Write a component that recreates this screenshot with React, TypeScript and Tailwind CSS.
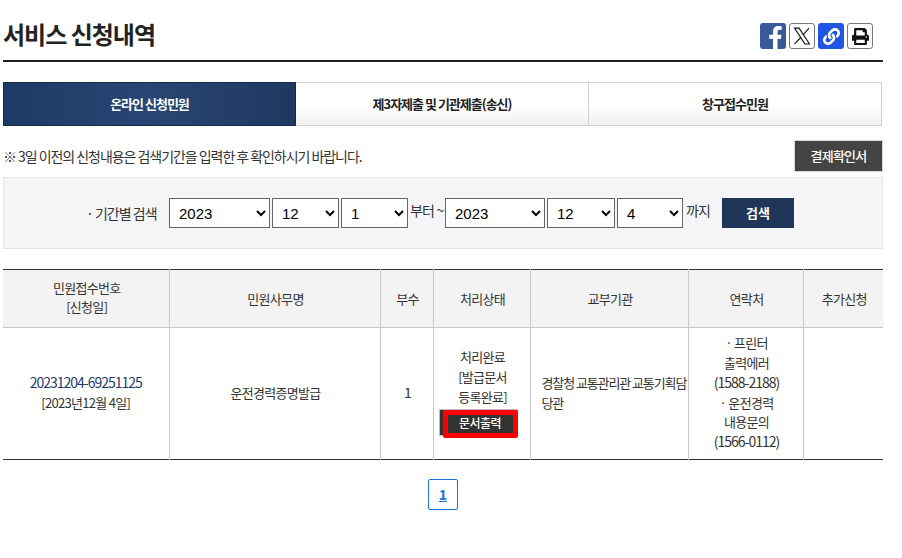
import { FaFacebookF, FaLink, FaPrint } from 'react-icons/fa';

const font = '[font-family:"Noto_Sans_CJK_KR","Liberation_Sans",sans-serif]';

function DateSelect({ value, width }: { value: string; width: string }) {
  return (
    <select
      defaultValue={value}
      className={`${width} h-[30px] border border-[#666] bg-white pl-[5px] text-[15px] text-black [font-family:"Liberation_Sans",sans-serif] rounded-none`}
    >
      <option>{value}</option>
    </select>
  );
}

function Tab({ label, active }: { label: string; active?: boolean }) {
  if (active) {
    return (
      <div className="flex h-[44px] w-[293px] items-center justify-center border border-[#14284a] bg-[linear-gradient(90deg,#1e3a66,#284674_50%,#1f3860)] text-[13px] font-bold tracking-[-1px] text-white">
        {label}
      </div>
    );
  }
  return (
    <div className="flex h-[44px] w-[293px] items-center justify-center border-y border-r border-[#d2d2d2] bg-[linear-gradient(#ffffff_50%,#f0f0f0)] text-[13px] font-bold tracking-[-1px] text-[#222]">
      {label}
    </div>
  );
}

const th = 'border-r border-[#c8c8c8] pl-[2px] font-normal text-[13px] leading-[19px] text-[#333] text-center align-middle';
const td = 'border-r border-[#c8c8c8] pb-[2px] text-[13px] leading-[19.8px] text-[#333] text-center align-middle';
const num = 'text-[14px] leading-none tracking-[-1px]';

export default function App() {
  return (
    <div className={`h-[558px] w-[902px] overflow-hidden bg-white ${font}`}>
      <div className="ml-[3px] w-[880px]">
        {/* 제목 */}
        <div className="flex h-[62px] items-center justify-between border-b-2 border-[#222] pt-[8px]">
          <h1 className="text-[24px] font-bold leading-[36px] tracking-[-1px] text-[#222]">서비스 신청내역</h1>
          <div className="mr-[10px] mt-[4px] flex gap-[3px]">
            <span className="flex h-[26px] w-[26px] items-end justify-center overflow-hidden rounded-[3px] bg-[#3b5998]">
              <FaFacebookF className="h-[23px] w-[23px] translate-x-[2px] text-white" />
            </span>
            <span className="flex h-[26px] w-[26px] items-center justify-center rounded-[3px] border border-[#777] bg-white">
              <svg viewBox="0 0 24 24" className="h-[20px] w-[20px]" fill="none" stroke="#111" strokeWidth="1.3">
                <path d="M3 2.5h5.5l12.5 19h-5.5z" />
                <path d="M20.5 2.5 13 11M10.5 13.8 3 21.5" />
              </svg>
            </span>
            <span className="flex h-[26px] w-[26px] items-center justify-center rounded-[3px] bg-[#1f55e0]">
              <FaLink className="h-[17px] w-[17px] text-white" />
            </span>
            <span className="flex h-[26px] w-[26px] items-center justify-center rounded-[3px] border border-[#777] bg-white">
              <FaPrint className="h-[17px] w-[17px] text-[#111]" />
            </span>
          </div>
        </div>

        {/* 탭 */}
        <div className="mt-[20px] flex">
          <Tab label="온라인 신청민원" active />
          <Tab label="제3자제출 및 기관제출(송신)" />
          <Tab label="창구접수민원" />
        </div>

        {/* 안내 */}
        <div className="mt-[14px] flex h-[32px] items-center justify-between">
          <p className="text-[14px] tracking-[-1.05px] text-[#333]">
            ※ 3일 이전의 신청내용은 검색기간을 입력한 후 확인하시기 바랍니다.
          </p>
          <button className="h-[32px] w-[89px] border border-[#d5d5d5] bg-[#444] text-[13px] font-medium tracking-[-0.8px] text-white">
            결제확인서
          </button>
        </div>

        {/* 검색 */}
        <div className="mt-[5px] flex h-[72px] items-center border border-[#e6e6ea] bg-[#f5f5f8] pl-[82px]">
          <span className="mr-[11px] w-[72px] whitespace-nowrap text-[14px] tracking-[-1px] text-[#333]">· 기간별 검색</span>
          <div className="flex items-center gap-[2px]">
            <DateSelect value="2023" width="w-[101px]" />
            <DateSelect value="12" width="w-[67px]" />
            <DateSelect value="1" width="w-[67px]" />
            <span className="mb-[5px] w-[33px] whitespace-nowrap text-[14px] tracking-[-0.8px] text-[#333]">부터 ~</span>
            <DateSelect value="2023" width="w-[100px]" />
            <DateSelect value="12" width="w-[68px]" />
            <DateSelect value="4" width="w-[66px]" />
            <span className="mb-[5px] ml-[1px] w-[34px] text-[14px] tracking-[-0.8px] text-[#333]">까지</span>
            <button className="h-[30px] w-[72px] bg-[#1f3559] text-[13px] font-bold text-white">검색</button>
          </div>
        </div>

        {/* 목록 */}
        <table className="mt-[20px] w-[880px] table-fixed border-collapse border-y border-t-[#333] border-b-[#333] tracking-[-0.7px]">
          <colgroup>
            <col className="w-[166px]" />
            <col className="w-[211px]" />
            <col className="w-[53px]" />
            <col className="w-[97px]" />
            <col className="w-[158px]" />
            <col className="w-[115px]" />
            <col className="w-[80px]" />
          </colgroup>
          <thead>
            <tr className="h-[58px] border-b border-[#c8c8c8] bg-[#f3f3f3]">
              <th className={`${th} pb-[4px]`}>
                민원접수번호
                <br />
                [신청일]
              </th>
              <th className={th}>민원사무명</th>
              <th className={th}>부수</th>
              <th className={th}>처리상태</th>
              <th className={th}>교부기관</th>
              <th className={th}>연락처</th>
              <th className={`${th} border-r-0`}>추가신청</th>
            </tr>
          </thead>
          <tbody>
            <tr className="h-[132px]">
              <td className={td}>
                <span className={`${num} text-[#1f3a6e]`}>20231204-69251125</span>
                <br />
                [2023년12월 4일]
              </td>
              <td className={`${td} pl-[2px]`}>운전경력증명발급</td>
              <td className={`${td} pl-[2px]`}>
                <span className="text-[14px] leading-none">1</span>
              </td>
              <td className={`${td} pb-[4px] pl-[2px]`}>
                <div className="pb-[1px]">
                  처리완료
                  <br />
                  [발급문서
                  <br />
                  등록완료]
                </div>
                <div className="relative mx-auto mt-[1px] h-[27px] w-[79px] translate-x-[-4px] border border-[#bbb] bg-[#333] pl-[3px] text-[12px] font-medium leading-[25px] tracking-[-0.5px] text-white">
                  문서출력
                  <span className="absolute left-[3px] top-0 h-[28px] w-[75px] rounded-[2px] border-[5px] border-[#f00]" />
                </div>
              </td>
              <td className={`${td} break-all pl-[11px] text-left tracking-[-1.1px]`}>
                경찰청 교통관리관 교통기획담당관
              </td>
              <td className={`${td} pl-[2px]`}>
                · 프린터
                <br />
                출력에러
                <br />
                <span className={num}>(1588-2188)</span>
                <br />· 운전경력
                <br />
                내용문의
                <br />
                <span className={num}>(1566-0112)</span>
              </td>
              <td className={`${td} border-r-0`} />
            </tr>
          </tbody>
        </table>

        {/* 페이지 */}
        <div className="mt-[19px] flex justify-center">
          <a className="flex h-[31px] w-[30px] items-center justify-center rounded-[2px] border border-[#1a73d9] text-[14px] font-bold text-[#1a73d9] underline">
            1
          </a>
        </div>
      </div>
    </div>
  );
}
